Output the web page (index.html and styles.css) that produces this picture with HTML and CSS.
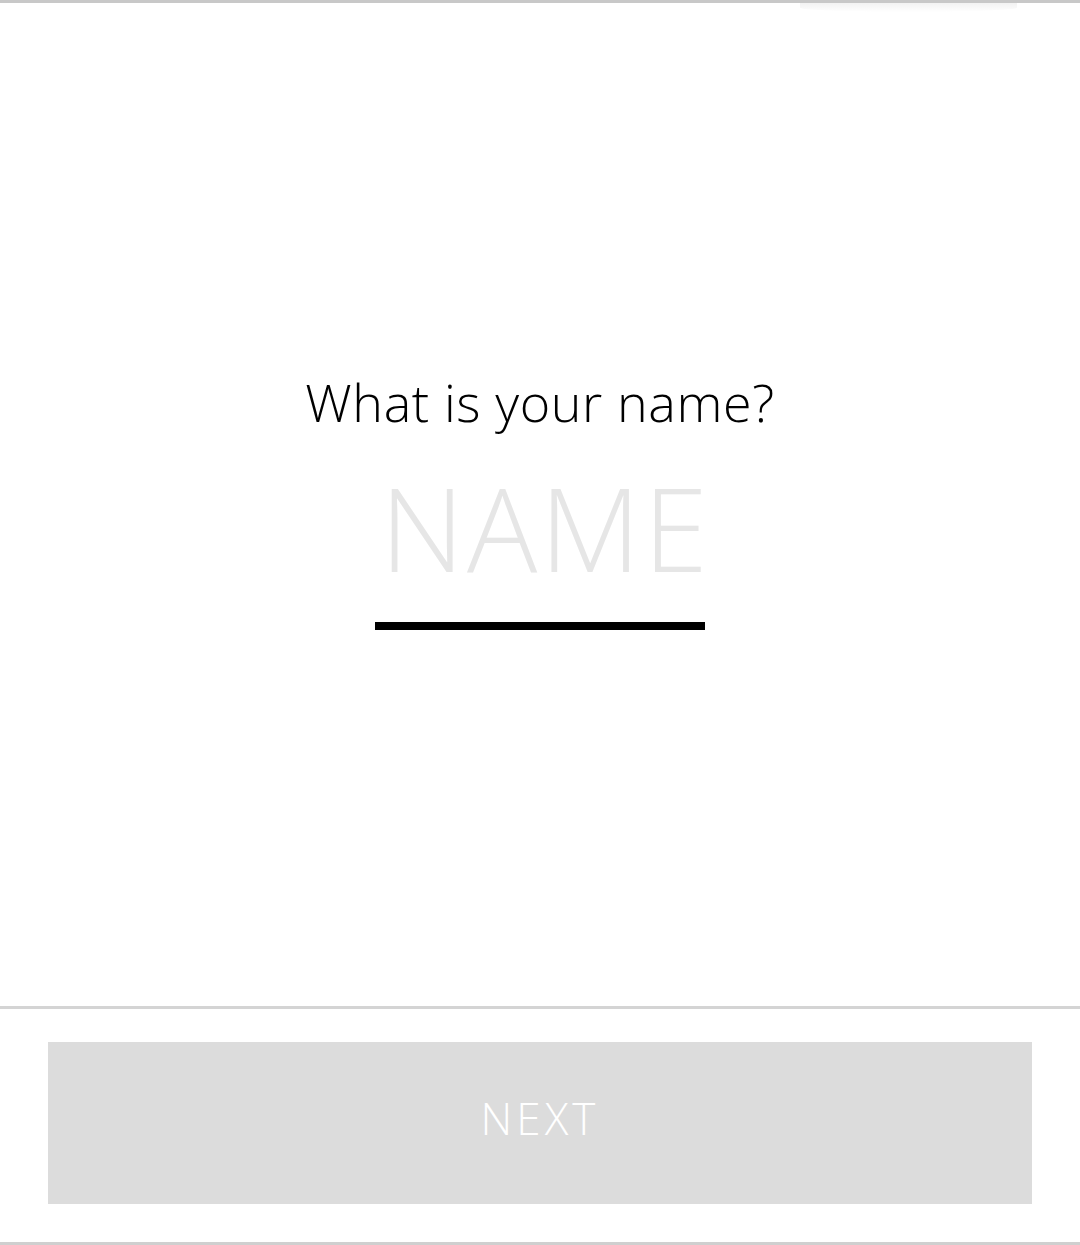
FILE: index.html
```html
<!DOCTYPE html>
<html lang="en">
<head>
<meta charset="utf-8">
<title>Name</title>
<link rel="stylesheet" href="styles.css">
</head>
<body>
<div class="screen">
  <div class="topbar"><div class="tab-shadow"></div></div>
  <main class="content">
    <h1 class="question">What is your name?</h1>
    <input class="name-input" type="text" placeholder="NAME">
  </main>
  <footer class="footer">
    <button class="next-btn" type="button">NEXT</button>
  </footer>
</div>
</body>
</html>
```

FILE: styles.css
```css
html, body {
  margin: 0;
  padding: 0;
  background: #ffffff;
}
body {
  font-family: "Open Sans", "Noto Sans", sans-serif;
}
.screen {
  width: 1080px;
  height: 1245px;
  display: flex;
  flex-direction: column;
  box-sizing: border-box;
  border-bottom: 3px solid #cfcfcf;
}
.topbar {
  height: 3px;
  background: #c8c8c8;
  position: relative;
  flex: 0 0 auto;
}
.tab-shadow {
  position: absolute;
  left: 800px;
  width: 217px;
  top: 3px;
  height: 9px;
  background: linear-gradient(to bottom, rgba(0,0,0,0.05), rgba(0,0,0,0));
  border-radius: 0 0 50% 50%;
}
.content {
  flex: 1 1 auto;
  display: flex;
  flex-direction: column;
  align-items: center;
  justify-content: center;
  padding-bottom: 8px;
}
.question {
  margin: 0;
  font-weight: 300;
  font-size: 52px;
  line-height: 62px;
  color: #000;
  letter-spacing: 0.6px;
}
.name-input {
  margin-top: 28px;
  width: 330px;
  height: 169px;
  box-sizing: border-box;
  border: none;
  border-bottom: 8px solid #000;
  outline: none;
  padding: 0 0 31px 5px;
  font-family: "Open Sans", "Noto Sans", sans-serif;
  font-weight: 300;
  font-size: 117px;
  line-height: 130px;
  letter-spacing: 2.5px;
  text-align: center;
  background: transparent;
}
.name-input::placeholder {
  color: #e6e6e6;
  opacity: 1;
}
.footer {
  flex: 0 0 auto;
  border-top: 3px solid #d4d4d4;
  padding: 33px 48px 38px;
}
.next-btn {
  display: block;
  width: 100%;
  height: 162px;
  border: none;
  background: #dcdcdc;
  color: #ffffff;
  font-family: "Open Sans", "Noto Sans", sans-serif;
  font-weight: 300;
  font-size: 44px;
  letter-spacing: 4px;
  padding: 0 0 10px 0;
}
```
